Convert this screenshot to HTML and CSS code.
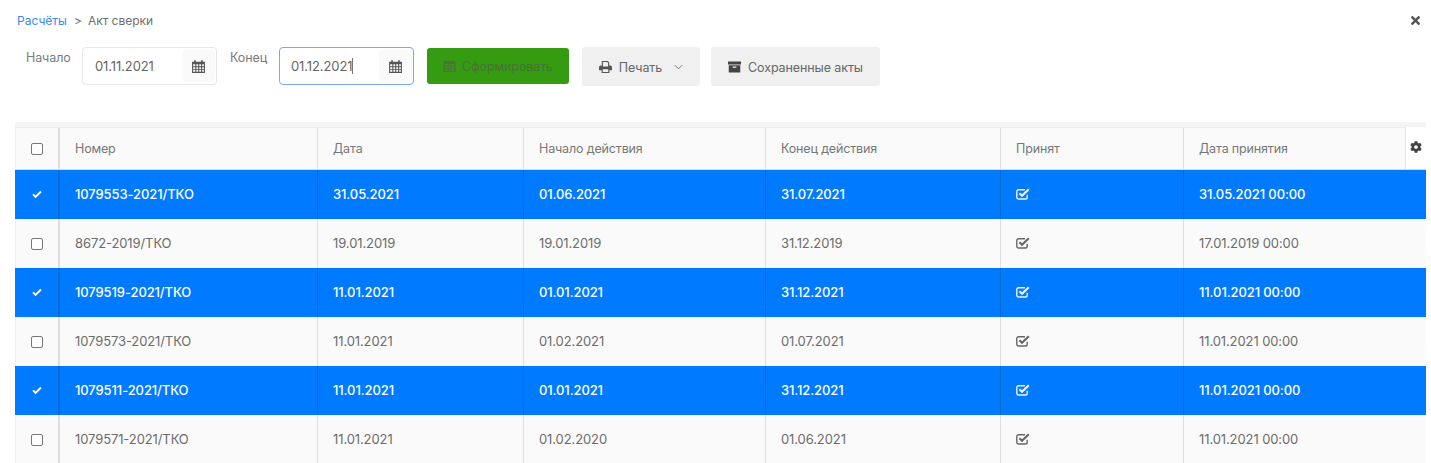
FILE: index.html
```html
<!DOCTYPE html>
<html lang="ru">
<head>
<meta charset="utf-8">
<title>Акт сверки</title>
<link rel="stylesheet" href="styles.css">
</head>
<body>
<svg class="defs" aria-hidden="true">
  <symbol id="i-cal" viewBox="0 0 14 14"><path d="M1 2.500h2V1.200h1.500v1.300h5V1.200H11v1.300h2V13H1z M2 5v1.800h2V5zm3 0v1.800h1.700V5zm2.700 0v1.800h1.700V5zm2.700 0v1.800H12V5zM2 7.600v1.700h2V7.600zm3 0v1.700h1.700V7.600zm2.700 0v1.700h1.700V7.600zm2.700 0v1.700H12V7.600zM2 10.100V12h2v-1.900zm3 0V12h1.700v-1.900zm2.700 0V12h1.700v-1.900zm2.700 0V12H12v-1.900z" fill-rule="evenodd"/></symbol>
  <symbol id="i-table" viewBox="0 0 14 12"><path d="M.5 0h13v12H.5zM2 3.400v1.900h3V3.400zm4 0v1.900h2V3.400zm3 0v1.900h3V3.400zM2 6.200v1.900h3V6.200zm4 0v1.900h2V6.200zm3 0v1.900h3V6.200zM2 9v1.800h3V9zm4 0v1.800h2V9zm3 0v1.800h3V9z" fill-rule="evenodd"/></symbol>
  <symbol id="i-print" viewBox="0 0 14 13"><path d="M3 0h6.500L11 1.500V5h1.200C13.200 5 14 5.800 14 6.800V10h-2.800v3H2.800v-3H0V6.800C0 5.800.8 5 1.800 5H3zm1.200 1.200V6h5.600V2.200L8.800 1.200zM4 9v2.800h6V9z" fill-rule="evenodd"/></symbol>
  <symbol id="i-archive" viewBox="0 0 14 12"><path d="M0 0h14v3.200H0zM.8 4h12.400v8H.8zM5 5.500v1.300h4V5.500z" fill-rule="evenodd"/></symbol>
  <symbol id="i-check" viewBox="0 0 14 12"><path d="M11.200 6.800v2.400a1.800 1.800 0 0 1-1.800 1.800H2.600A1.800 1.800 0 0 1 .8 9.200V3.500a1.800 1.800 0 0 1 1.800-1.800H9" fill="none" stroke="currentColor" stroke-width="1.400"/><path d="M3.400 5.200l2.600 2.600 6.800-6.600" fill="none" stroke="currentColor" stroke-width="2.100"/></symbol>
  <symbol id="i-tick" viewBox="0 0 12 10"><path d="M4.300 9.600.4 5.700l1.700-1.700 2.200 2.200L9.900.5l1.700 1.700z"/></symbol>
  <symbol id="i-cog" viewBox="0 0 512 512"><path d="M487.400 315.700l-42.600-24.600c4.300-23.200 4.300-47 0-70.200l42.600-24.600c4.900-2.800 7.100-8.600 5.500-14-11.100-35.600-30-67.800-54.700-94.600-3.800-4.100-10-5.100-14.800-2.300L380.800 110c-17.900-15.400-38.500-27.300-60.800-35.100V25.800c0-5.600-3.900-10.500-9.400-11.700-36.700-8.200-74.300-7.800-109.200 0-5.500 1.200-9.400 6.100-9.400 11.700V75c-22.200 7.900-42.800 19.800-60.800 35.100L88.700 85.500c-4.900-2.800-11-1.900-14.800 2.300-24.700 26.700-43.600 58.900-54.700 94.600-1.700 5.400.6 11.200 5.500 14L67.300 221c-4.300 23.200-4.300 47 0 70.200l-42.600 24.600c-4.900 2.800-7.100 8.600-5.500 14 11.100 35.600 30 67.800 54.700 94.600 3.800 4.100 10 5.100 14.800 2.300l42.600-24.600c17.900 15.400 38.500 27.300 60.800 35.100v49.200c0 5.600 3.900 10.500 9.400 11.700 36.700 8.200 74.300 7.800 109.200 0 5.500-1.200 9.400-6.100 9.400-11.700v-49.200c22.200-7.900 42.800-19.800 60.800-35.100l42.600 24.600c4.900 2.800 11 1.900 14.800-2.300 24.700-26.700 43.600-58.900 54.700-94.600 1.500-5.500-.7-11.300-5.600-14.100zM256 336c-44.100 0-80-35.900-80-80s35.900-80 80-80 80 35.900 80 80-35.900 80-80 80z"/></symbol>
  <symbol id="i-times" viewBox="0 0 352 512"><path d="M242.720 256l100.070-100.070c12.280-12.280 12.280-32.190 0-44.480l-22.240-22.240c-12.280-12.280-32.190-12.280-44.480 0L176 189.280 75.930 89.210c-12.280-12.280-32.190-12.280-44.480 0L9.210 111.450c-12.280 12.280-12.280 32.190 0 44.480L109.280 256 9.210 356.070c-12.280 12.280-12.280 32.190 0 44.480l22.240 22.240c12.280 12.280 32.200 12.280 44.480 0L176 322.720l100.070 100.070c12.280 12.280 32.200 12.280 44.480 0l22.240-22.240c12.280-12.280 12.280-32.190 0-44.480L242.720 256z"/></symbol>
</svg>

<div class="page">
  <div class="topbar">
    <div class="crumbs"><a class="crumb-link" href="#">Расчёты</a><span class="crumb-sep">&gt;</span><span>Акт сверки</span></div>
    <svg class="close"><use href="#i-times"/></svg>
  </div>

  <div class="toolbar">
    <label class="field-label">Начало</label>
    <div class="date">
      <span class="date-value">01.11.2021</span>
      <span class="date-btn"><svg class="ic-cal"><use href="#i-cal"/></svg></span>
    </div>
    <label class="field-label field-label-end">Конец</label>
    <div class="date date-focus">
      <span class="date-value">01.12.2021<span class="caret"></span></span>
      <span class="date-btn"><svg class="ic-cal"><use href="#i-cal"/></svg></span>
    </div>
    <button class="btn btn-green"><svg class="ic-table"><use href="#i-table"/></svg>Сформировать</button>
    <button class="btn btn-print"><svg class="ic-print"><use href="#i-print"/></svg>Печать<svg class="ic-chev" viewBox="0 0 10 6"><path d="M1 1l4 4 4-4" fill="none" stroke="currentColor" stroke-width="1.100"/></svg></button>
    <button class="btn btn-saved"><svg class="ic-archive"><use href="#i-archive"/></svg>Сохраненные акты</button>
  </div>

  <div class="band"></div>
  <table class="grid">
    <colgroup>
      <col class="c1"><col class="c2"><col class="c3"><col class="c4"><col class="c5"><col class="c6"><col class="c7"><col class="c8">
    </colgroup>
    <thead>
      <tr>
        <th class="cell-box"><span class="box"></span></th>
        <th>Номер</th><th>Дата</th><th>Начало действия</th><th>Конец действия</th><th>Принят</th><th>Дата принятия</th>
        <th class="cell-cog"><svg class="ic-cog"><use href="#i-cog"/></svg></th>
      </tr>
    </thead>
    <tbody>
      <tr class="sel"><td class="cell-box"><svg class="ic-tick"><use href="#i-tick"/></svg></td><td>1079553-2021/ТКО</td><td>31.05.2021</td><td>01.06.2021</td><td>31.07.2021</td><td><svg class="ic-check"><use href="#i-check"/></svg></td><td colspan="2">31.05.2021 00:00</td></tr>
      <tr><td class="cell-box"><span class="box"></span></td><td>8672-2019/ТКО</td><td>19.01.2019</td><td>19.01.2019</td><td>31.12.2019</td><td><svg class="ic-check"><use href="#i-check"/></svg></td><td colspan="2">17.01.2019 00:00</td></tr>
      <tr class="sel"><td class="cell-box"><svg class="ic-tick"><use href="#i-tick"/></svg></td><td>1079519-2021/ТКО</td><td>11.01.2021</td><td>01.01.2021</td><td>31.12.2021</td><td><svg class="ic-check"><use href="#i-check"/></svg></td><td colspan="2">11.01.2021 00:00</td></tr>
      <tr><td class="cell-box"><span class="box"></span></td><td>1079573-2021/ТКО</td><td>11.01.2021</td><td>01.02.2021</td><td>01.07.2021</td><td><svg class="ic-check"><use href="#i-check"/></svg></td><td colspan="2">11.01.2021 00:00</td></tr>
      <tr class="sel"><td class="cell-box"><svg class="ic-tick"><use href="#i-tick"/></svg></td><td>1079511-2021/ТКО</td><td>11.01.2021</td><td>01.01.2021</td><td>31.12.2021</td><td><svg class="ic-check"><use href="#i-check"/></svg></td><td colspan="2">11.01.2021 00:00</td></tr>
      <tr><td class="cell-box"><span class="box"></span></td><td>1079571-2021/ТКО</td><td>11.01.2021</td><td>01.02.2020</td><td>01.06.2021</td><td><svg class="ic-check"><use href="#i-check"/></svg></td><td colspan="2">11.01.2021 00:00</td></tr>
    </tbody>
  </table>
</div>
</body>
</html>
```

FILE: styles.css
```css
* { box-sizing: border-box; }
html, body { margin: 0; height: 100%; overflow: hidden; background: #fff; }
body { font-family: Inter, "Liberation Sans", sans-serif; font-size: 13px; color: #6f6f6f; letter-spacing: -.1px; }
.defs { display: none; }
.page { padding: 0 5px 0 15px; }

.topbar { display: flex; align-items: center; justify-content: space-between; height: 41px; padding: 0 6px 1px 2px; }
.crumbs { font-size: 12px; display: flex; letter-spacing: 0; }
.crumb-link { color: #3d86f5; text-decoration: none; }
.crumb-sep { margin: 0 6px 0 7px; }
.close { width: 9px; height: 13px; fill: #555; }

.toolbar { display: flex; align-items: flex-start; height: 81px; padding-top: 6px; margin-left: 11px; }
.field-label { font-size: 12.5px; color: #7b7b7b; line-height: 17px; margin-top: 2px; width: 56px; flex: none; }
.field-label-end { width: 49px; margin-left: 13px; }
.date { width: 135px; height: 38px; border: 1px solid #e8e8e8; border-radius: 4px; display: flex; align-items: center; justify-content: space-between; padding: 2px 1px 2px 12px; background: #fff; }
.date-focus { border-color: #7aa7ee; padding-left: 11px; }
.date-value { color: #666; display: flex; align-items: center; }
.caret { width: 1px; height: 16px; background: #777; }
.date-btn { width: 33px; height: 32px; background: #fafafa; border-radius: 4px; display: flex; align-items: center; justify-content: center; }
.ic-cal { width: 15px; height: 15px; fill: #555; }

.btn { font: inherit; font-size: 12.5px; letter-spacing: -.1px; border: 0; border-radius: 3px; display: flex; align-items: center; justify-content: center; padding: 0; background: #f0f0f0; color: #666; }
.btn-green { width: 142px; height: 36px; margin: 1px 0 0 13px; background: #359b10; color: #47723a; }
.btn-print { width: 118px; height: 39px; margin-left: 13px; padding-top: 1px; }
.btn-saved { width: 169px; height: 39px; margin-left: 11px; padding-top: 1px; }
.ic-table { width: 13px; height: 11px; fill: #4a7437; margin-right: 6px; }
.ic-print { width: 13px; height: 12px; fill: #555; margin-right: 7px; }
.ic-archive { width: 13px; height: 12px; fill: #444; margin-right: 7px; }
.ic-chev { width: 9px; height: 6px; margin-left: 12px; color: #777; }

.band { height: 5px; background: #f4f4f4; }
.grid { width: 1411px; table-layout: fixed; border-collapse: separate; border-spacing: 0; }
.c1 { width: 44px; } .c2 { width: 258px; } .c3 { width: 206px; } .c4 { width: 242px; }
.c5 { width: 235px; } .c6 { width: 183px; } .c7 { width: 222px; } .c8 { width: 21px; }
.grid th, .grid td { padding: 0 0 0 15px; text-align: left; font-weight: 400; border-left: 1px solid #dedede; white-space: nowrap; overflow: hidden; }
.grid th { height: 43px; font-size: 12.5px; letter-spacing: -.15px; background: #fafafa; color: #777; border-bottom: 1px solid #d9d9d9; border-top: 1px solid #eee; }
.grid td { height: 49px; padding-bottom: 2px; background: #fafafa; color: #6c6c6c; }
.grid th:first-child, .grid td:first-child { border-left: 1px solid #eee; border-right: 1px solid #dedede; }
.grid .cell-box { padding: 0 0 2px; text-align: center; }
.grid .cell-cog { padding: 0; text-align: center; background: #fff; border-top: 0; border-left: 1px solid #e5e5e5; vertical-align: middle; }
.box { display: inline-block; width: 12px; height: 12px; border: 1px solid #777; border-radius: 2px; background: #fff; vertical-align: middle; }
.ic-cog { width: 12px; height: 12px; fill: #444; display: block; margin: 0 auto 3px; }
.ic-check { width: 14px; height: 12px; color: #666; display: block; }
.ic-tick { width: 10px; height: 9px; fill: #fff; display: inline-block; vertical-align: middle; }

.grid .sel td { background: #007bff; color: #fff; font-weight: 500; border-left-color: #0869cf; }
.grid .sel td:first-child { border-left-color: #007bff; border-right-color: #0869cf; }
.grid .sel .ic-check { color: #eaf3ff; }
```
